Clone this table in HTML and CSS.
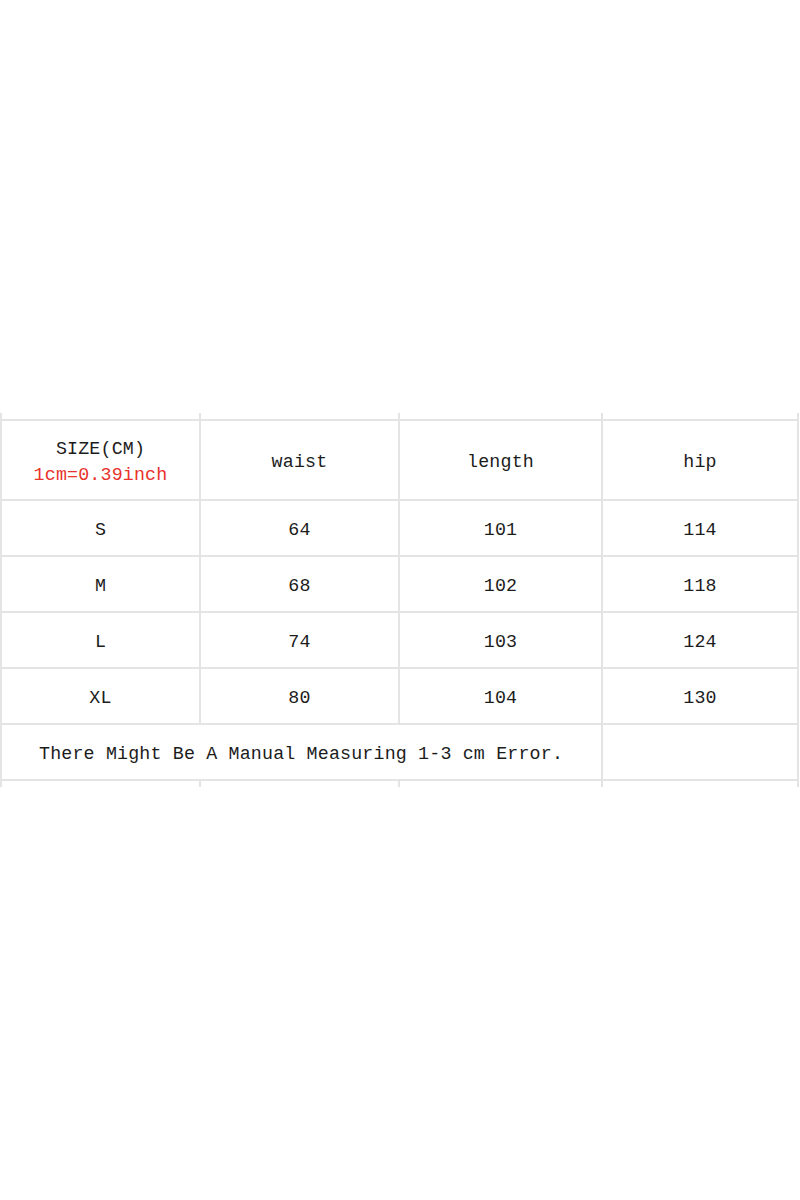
FILE: index.html
```html
<!DOCTYPE html>
<html>
<head>
<meta charset="utf-8">
<link rel="stylesheet" href="styles.css">
</head>
<body>
<div class="page">
  <table class="chart">
    <colgroup>
      <col class="c1"><col class="c2"><col class="c3"><col class="c4">
    </colgroup>
    <tr class="stub"><td></td><td></td><td></td><td></td></tr>
    <tr class="head">
      <td><div>SIZE(CM)</div><div class="red">1cm=0.39inch</div></td>
      <td>waist</td>
      <td>length</td>
      <td>hip</td>
    </tr>
    <tr class="row"><td>S</td><td>64</td><td>101</td><td>114</td></tr>
    <tr class="row"><td>M</td><td>68</td><td>102</td><td>118</td></tr>
    <tr class="row"><td>L</td><td>74</td><td>103</td><td>124</td></tr>
    <tr class="row"><td>XL</td><td>80</td><td>104</td><td>130</td></tr>
    <tr class="row note"><td colspan="3">There Might Be A Manual Measuring 1-3 cm Error.</td><td></td></tr>
    <tr class="stub bottom"><td></td><td></td><td></td><td></td></tr>
  </table>
</div>
</body>
</html>
```

FILE: styles.css
```css
html, body {
  margin: 0;
  padding: 0;
  background: #ffffff;
}
.page {
  width: 800px;
  height: 1200px;
  padding-top: 413px;
  box-sizing: border-box;
}
.chart {
  border-collapse: collapse;
  table-layout: fixed;
  width: 797px;
  font-family: "Liberation Mono", "DejaVu Sans Mono", monospace;
  font-size: 18.3px;
  letter-spacing: 0.18px;
  color: #1c1c1c;
}
.c1 { width: 199px; }
.c2 { width: 199px; }
.c3 { width: 203px; }
.c4 { width: 196px; }
.chart td {
  border: 2px solid #e4e4e4;
  text-align: center;
  vertical-align: middle;
  padding: 3px 0 0 0;
}
.stub td {
  border-top: none;
  border-bottom: none;
  height: 6px;
  padding: 0;
}
.head td {
  height: 75px;
}
.head .red {
  color: #e8322b;
  margin-top: 6px;
}
.row td {
  height: 51px;
}
.note td:first-child {
  text-align: left;
  padding-left: 37px;
}
```
